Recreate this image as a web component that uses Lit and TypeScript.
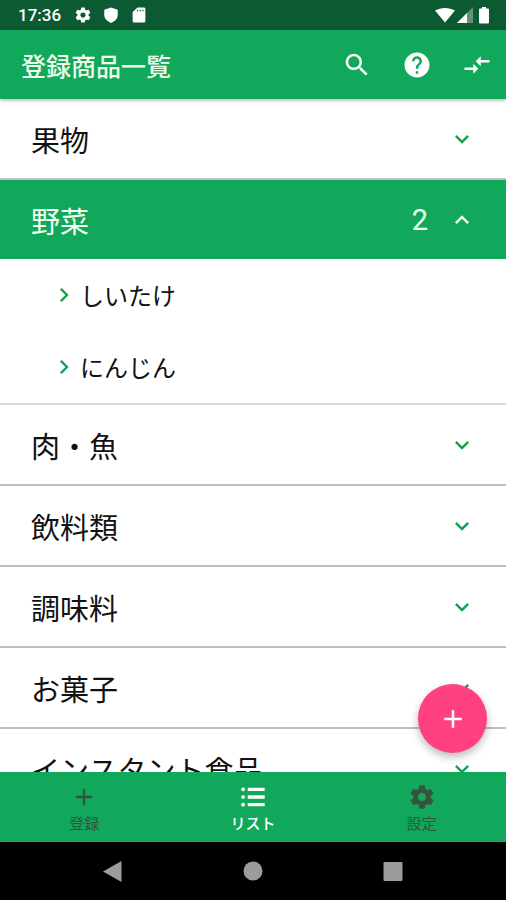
import { LitElement, html, css, svg } from "lit";
import { customElement, state } from "lit/decorators.js";

const GEAR =
  "M19.43 12.98c.04-.32.07-.64.07-.98s-.03-.66-.07-.98l2.11-1.65c.19-.15.24-.42.12-.64l-2-3.46c-.12-.22-.39-.3-.61-.22l-2.49 1c-.52-.4-1.08-.73-1.69-.98l-.38-2.65C14.46 2.18 14.25 2 14 2h-4c-.25 0-.46.18-.49.42l-.38 2.65c-.61.25-1.17.59-1.69.98l-2.49-1c-.23-.09-.49 0-.61.22l-2 3.46c-.13.22-.07.49.12.64l2.11 1.65c-.04.32-.07.65-.07.98s.03.66.07.98l-2.11 1.65c-.19.15-.24.42-.12.64l2 3.46c.12.22.39.3.61.22l2.49-1c.52.4 1.08.73 1.69.98l.38 2.65c.03.24.24.42.49.42h4c.25 0 .46-.18.49-.42l.38-2.65c.61-.25 1.17-.59 1.69-.98l2.49 1c.23.09.49 0 .61-.22l2-3.46c.12-.22.07-.49-.12-.64l-2.11-1.65zM12 15.5c-1.93 0-3.5-1.57-3.5-3.5s1.57-3.5 3.5-3.5 3.5 1.57 3.5 3.5-1.57 3.5-3.5 3.5z";
const SEARCH =
  "M15.5 14h-.79l-.28-.27C15.41 12.59 16 11.11 16 9.5 16 5.91 13.09 3 9.5 3S3 5.91 3 9.5 5.91 16 9.5 16c1.61 0 3.09-.59 4.23-1.57l.27.28v.79l5 4.99L20.49 19l-4.99-5zm-6 0C7.01 14 5 11.99 5 9.5S7.01 5 9.5 5 14 7.01 14 9.5 11.99 14 9.5 14z";
const HELP =
  "M12 2C6.48 2 2 6.48 2 12s4.48 10 10 10 10-4.48 10-10S17.52 2 12 2zm1 17h-2v-2h2v2zm2.07-7.75l-.9.92C13.45 12.9 13 13.5 13 15h-2v-.5c0-1.1.45-2.1 1.17-2.83l1.24-1.26c.37-.36.59-.86.59-1.41 0-1.1-.9-2-2-2s-2 .9-2 2H8c0-2.21 1.79-4 4-4s4 1.79 4 4c0 .88-.36 1.68-.93 2.25z";
const COMPARE = "M9.01 14H2v2h7.01v3L13 15l-3.99-4v3zm5.98-1v-3H22V8h-7.01V5L11 9l3.99 4z";
const DOWN = "M16.59 8.59L12 13.17 7.41 8.59 6 10l6 6 6-6z";
const UP = "M12 8l-6 6 1.41 1.41L12 10.83l4.59 4.58L18 14z";
const RIGHT = "M10 6L8.59 7.41 13.17 12l-4.58 4.59L10 18l6-6z";
const PLUS = "M19 13h-6v6h-2v-6H5v-2h6V5h2v6h6v2z";
const LIST =
  "M3.500 3.800a1.600 1.600 0 1 0 .01 0zM3.500 10.400a1.600 1.600 0 1 0 .01 0zM3.500 17a1.600 1.600 0 1 0 .01 0zM7.500 4h14.500v2.800H7.500zM7.500 10.600h14.500v2.800H7.500zM7.500 17.200h14.500v2.800H7.500z";
const SHIELD = "M12 2L3 5v7c0 5 4 8.500 9 10.500 5-2 9-5.500 9-10.500V5z";
const SDCARD = "M18 2h-8L3.500 8v12c0 1.100.9 2 2 2h13c1.100 0 2-.9 2-2V4c0-1.100-.9-2-2-2zM11 7H9.500V5H11zm3.500 0H13V5h1.500zM18 7h-1.500V5H18z";

const icon = (d: string, size: string) =>
  html`<svg class="icon ${size}" viewBox="0 0 24 24" aria-hidden="true">${svg`<path d=${d}></path>`}</svg>`;

interface Category {
  name: string;
  items: string[];
}

const CATEGORIES: Category[] = [
  { name: "果物", items: [] },
  { name: "野菜", items: ["しいたけ", "にんじん"] },
  { name: "肉・魚", items: [] },
  { name: "飲料類", items: [] },
  { name: "調味料", items: [] },
  { name: "お菓子", items: [] },
  { name: "インスタント食品", items: [] },
];

const TABS = [
  { label: "登録", path: PLUS },
  { label: "リスト", path: LIST },
  { label: "設定", path: GEAR },
];

@customElement("app-root")
export class AppRoot extends LitElement {
  static styles = css`
    :host {
      display: flex;
      flex-direction: column;
      height: 100vh;
      background: #fff;
      color: #111;
      font-family: "Noto Sans CJK JP", Roboto, sans-serif;
    }
    * {
      box-sizing: border-box;
    }
    button {
      border: 0;
      margin: 0;
      padding: 0;
      background: none;
      color: inherit;
      font: inherit;
      cursor: pointer;
    }
    h1, h2, ul {
      margin: 0;
      padding: 0;
      font-weight: 400;
      list-style: none;
    }
    .icon {
      display: block;
      flex: none;
      fill: currentColor;
    }
    .s18 { width: 18px; height: 18px; }
    .s28 { width: 28px; height: 28px; }
    .s30 { width: 30px; height: 30px; }
    .status {
      flex: none;
      display: flex;
      align-items: center;
      justify-content: space-between;
      height: 30px;
      padding: 0 13px 0 18px;
      background: #0b5a31;
      color: #fff;
      font-family: Roboto, sans-serif;
      font-size: 17px;
      font-weight: 500;
    }
    .status-group {
      display: flex;
      align-items: center;
      gap: 10px;
    }
    .status-group.right {
      gap: 2px;
    }
    .clock {
      margin-right: 3px;
    }
    .faint {
      opacity: 0.35;
    }
    .appbar {
      flex: none;
      position: relative;
      display: flex;
      align-items: center;
      justify-content: space-between;
      height: 69px;
      padding: 0 14px 0 21px;
      background: #12a85b;
      color: #eefbea;
      box-shadow: 0 1px 4px rgba(0, 0, 0, 0.35);
    }
    .title {
      font-size: 25px;
      font-weight: 500;
      line-height: 32px;
    }
    .actions {
      display: flex;
      gap: 30px;
      color: #fff;
    }
    .content {
      flex: 1;
      min-height: 0;
      position: relative;
      display: flex;
    }
    .list {
      flex: 1;
      overflow: hidden;
    }
    .category {
      border-bottom: 2px solid #bfbfbf;
    }
    .category.open {
      border-color: #dadada;
    }
    .head {
      display: flex;
      align-items: center;
      width: 100%;
      height: 79px;
      padding: 0 30px 0 31px;
      font-size: 29px;
      line-height: 40px;
      text-align: left;
    }
    .head .icon {
      color: #12a34f;
    }
    .name {
      flex: 1;
    }
    .count {
      margin-right: 20px;
      font-family: Roboto, sans-serif;
    }
    .open .head {
      background: #12a85b;
      color: #f4fff0;
    }
    .open .head .icon {
      color: #f4fff0;
    }
    .item {
      display: flex;
      align-items: center;
      gap: 2px;
      width: 100%;
      height: 72px;
      padding-left: 50px;
      font-size: 24px;
      line-height: 32px;
    }
    .item .icon {
      color: #12a34f;
    }
    .fab {
      position: absolute;
      right: 19px;
      bottom: 19px;
      display: grid;
      place-items: center;
      width: 69px;
      height: 69px;
      border-radius: 50%;
      background: #ff4081;
      color: #fff;
      box-shadow: 0 4px 8px rgba(0, 0, 0, 0.28);
    }
    .tabs {
      flex: none;
      display: flex;
      height: 70px;
      background: #12a85b;
      color: #35543f;
    }
    .tab {
      flex: 1;
      display: flex;
      flex-direction: column;
      align-items: center;
      justify-content: center;
      padding-top: 2px;
      font-size: 15px;
      line-height: 20px;
      gap: 2px;
    }
    .tab.active {
      color: #fff;
      font-weight: 500;
    }
    .system {
      flex: none;
      display: flex;
      justify-content: center;
      align-items: center;
      gap: 112px;
      height: 58px;
      background: #000;
      color: #9c9c9c;
    }
  `;

  @state() private open = "野菜";
  @state() private tab = "リスト";

  private toggle(name: string) {
    this.open = this.open === name ? "" : name;
  }

  private renderCategory(c: Category) {
    const open = c.name === this.open;
    return html`
      <li class="category ${open ? "open" : ""}">
        <h2>
          <button class="head" aria-expanded=${open} @click=${() => this.toggle(c.name)}>
            <span class="name">${c.name}</span>
            ${c.items.length ? html`<span class="count">${c.items.length}</span>` : null}
            ${icon(open ? UP : DOWN, "s28")}
          </button>
        </h2>
        ${open
          ? html`<ul>
              ${c.items.map((i) => html`<li><button class="item">${icon(RIGHT, "s28")}<span>${i}</span></button></li>`)}
            </ul>`
          : null}
      </li>
    `;
  }

  render() {
    return html`
      <div class="status">
        <div class="status-group">
          <span class="clock">17:36</span>
          ${icon(GEAR, "s18")}${icon(SHIELD, "s18")}${icon(SDCARD, "s18")}
        </div>
        <div class="status-group right">
          <svg class="icon" width="20" height="16" viewBox="0 0 20 16"><path d="M0 3.500C6 0 14 0 20 3.500L10 15.500z"></path></svg>
          <svg class="icon" width="16" height="16" viewBox="0 0 16 16">
            <path class="faint" d="M16 0v16H0z"></path>
            <path d="M10 6v10H0z"></path>
          </svg>
          <svg class="icon s18" viewBox="0 0 18 18"><path d="M5 2.500h2V1h4v1.500h2q1 0 1 1v13q0 1-1 1H5q-1 0-1-1v-13q0-1 1-1z"></path></svg>
        </div>
      </div>
      <header class="appbar">
        <h1 class="title">登録商品一覧</h1>
        <div class="actions">
          <button aria-label="検索">${icon(SEARCH, "s30")}</button>
          <button aria-label="ヘルプ">${icon(HELP, "s30")}</button>
          <button aria-label="並べ替え">${icon(COMPARE, "s30")}</button>
        </div>
      </header>
      <main class="content">
        <ul class="list">${CATEGORIES.map((c) => this.renderCategory(c))}</ul>
        <button class="fab" aria-label="追加">${icon(PLUS, "s30")}</button>
      </main>
      <nav class="tabs">
        ${TABS.map(
          (t) => html`<button class="tab ${t.label === this.tab ? "active" : ""}" @click=${() => (this.tab = t.label)}>
            ${icon(t.path, "s28")}<span>${t.label}</span>
          </button>`
        )}
      </nav>
      <div class="system">
        <button aria-label="戻る"><svg class="icon s28" viewBox="0 0 28 28"><path d="M4 14.500L22.500 4v21z"></path></svg></button>
        <button aria-label="ホーム"><svg class="icon s28" viewBox="0 0 28 28"><circle cx="14" cy="14" r="9.500"></circle></svg></button>
        <button aria-label="履歴"><svg class="icon s28" viewBox="0 0 28 28"><rect x="4.500" y="5" width="19" height="19" rx="1"></rect></svg></button>
      </div>
    `;
  }
}
